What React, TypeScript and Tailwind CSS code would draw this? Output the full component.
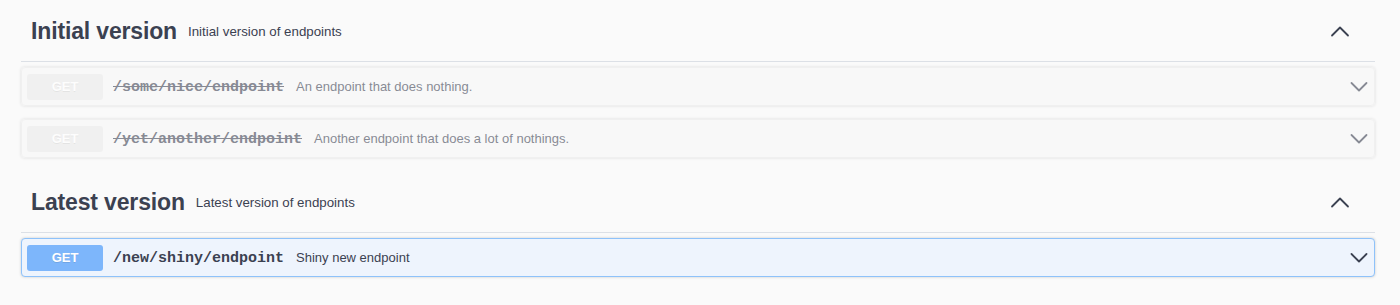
import React from 'react';

interface Endpoint {
  method: string;
  path: string;
  summary: string;
  deprecated?: boolean;
}

interface Section {
  name: string;
  description: string;
  endpoints: Endpoint[];
}

const sections: Section[] = [
  {
    name: 'Initial version',
    description: 'Initial version of endpoints',
    endpoints: [
      { method: 'GET', path: '/some/nice/endpoint', summary: 'An endpoint that does nothing.', deprecated: true },
      { method: 'GET', path: '/yet/another/endpoint', summary: 'Another endpoint that does a lot of nothings.', deprecated: true },
    ],
  },
  {
    name: 'Latest version',
    description: 'Latest version of endpoints',
    endpoints: [{ method: 'GET', path: '/new/shiny/endpoint', summary: 'Shiny new endpoint' }],
  },
];

const ChevronUp = () => (
  <svg width="20" height="20" viewBox="0 0 20 20" fill="none" className="shrink-0">
    <path d="M2 13.5 L10 5.5 L18 13.5" stroke="#3b4151" strokeWidth="1.8" strokeLinecap="round" strokeLinejoin="round" />
  </svg>
);

const ChevronDown = () => (
  <svg width="20" height="20" viewBox="0 0 20 20" fill="none" className="shrink-0">
    <path d="M2.5 6 L10 13.5 L17.5 6" stroke="#3b4151" strokeWidth="1.8" strokeLinecap="round" strokeLinejoin="round" />
  </svg>
);

const OpBlock: React.FC<{ op: Endpoint }> = ({ op }) => {
  const box = op.deprecated
    ? 'bg-[rgba(235,235,235,0.1)] border-[#ebebeb] opacity-60'
    : 'bg-[#eef4fd] border-[#8ec2fa]';
  const badge = op.deprecated ? 'bg-[#ebebeb]' : 'bg-[#7db6fb]';

  return (
    <div className={`mb-[13px] h-[39px] flex items-center border rounded-[4px] shadow-[0_0_3px_rgba(0,0,0,0.19)] pl-[5px] pr-[5px] ${box}`}>
      <span
        className={`w-[76px] h-[26px] shrink-0 flex items-center justify-center rounded-[3px] text-white text-[13px] font-bold [text-shadow:0_1px_0_rgba(0,0,0,0.1)] ${badge}`}
      >
        {op.method}
      </span>
      <span
        className={`pl-[10px] pr-[12px] pt-[3px] text-[15px] font-bold text-[#3b4151] font-['Liberation_Mono',monospace] ${op.deprecated ? 'line-through' : ''}`}
      >
        {op.path}
      </span>
      <span className="flex-1 text-[13px] text-[#3b4151]">{op.summary}</span>
      <ChevronDown />
    </div>
  );
};

export default function App() {
  return (
    <div className="min-h-[305px] bg-[#fafafa] font-['Liberation_Sans',Arial,sans-serif]">
      <div className="ml-[21px] mr-[25px]">
        {sections.map(section => (
          <div key={section.name}>
            <div className="h-[62px] pt-[2px] flex items-center border-b border-[#dce0e6] pl-[10px] pr-[25px]">
              <div className="flex-1 flex items-center">
                <h3 className="text-[23px] leading-normal font-bold tracking-[-0.15px] text-[#3b4151]">{section.name}</h3>
                <small className="pl-[11px] text-[13.3px] text-[#3b4151]">{section.description}</small>
              </div>
              <ChevronUp />
            </div>
            <div className="pt-[5px]">
              {section.endpoints.map(op => (
                <OpBlock key={op.path} op={op} />
              ))}
            </div>
          </div>
        ))}
      </div>
    </div>
  );
}
